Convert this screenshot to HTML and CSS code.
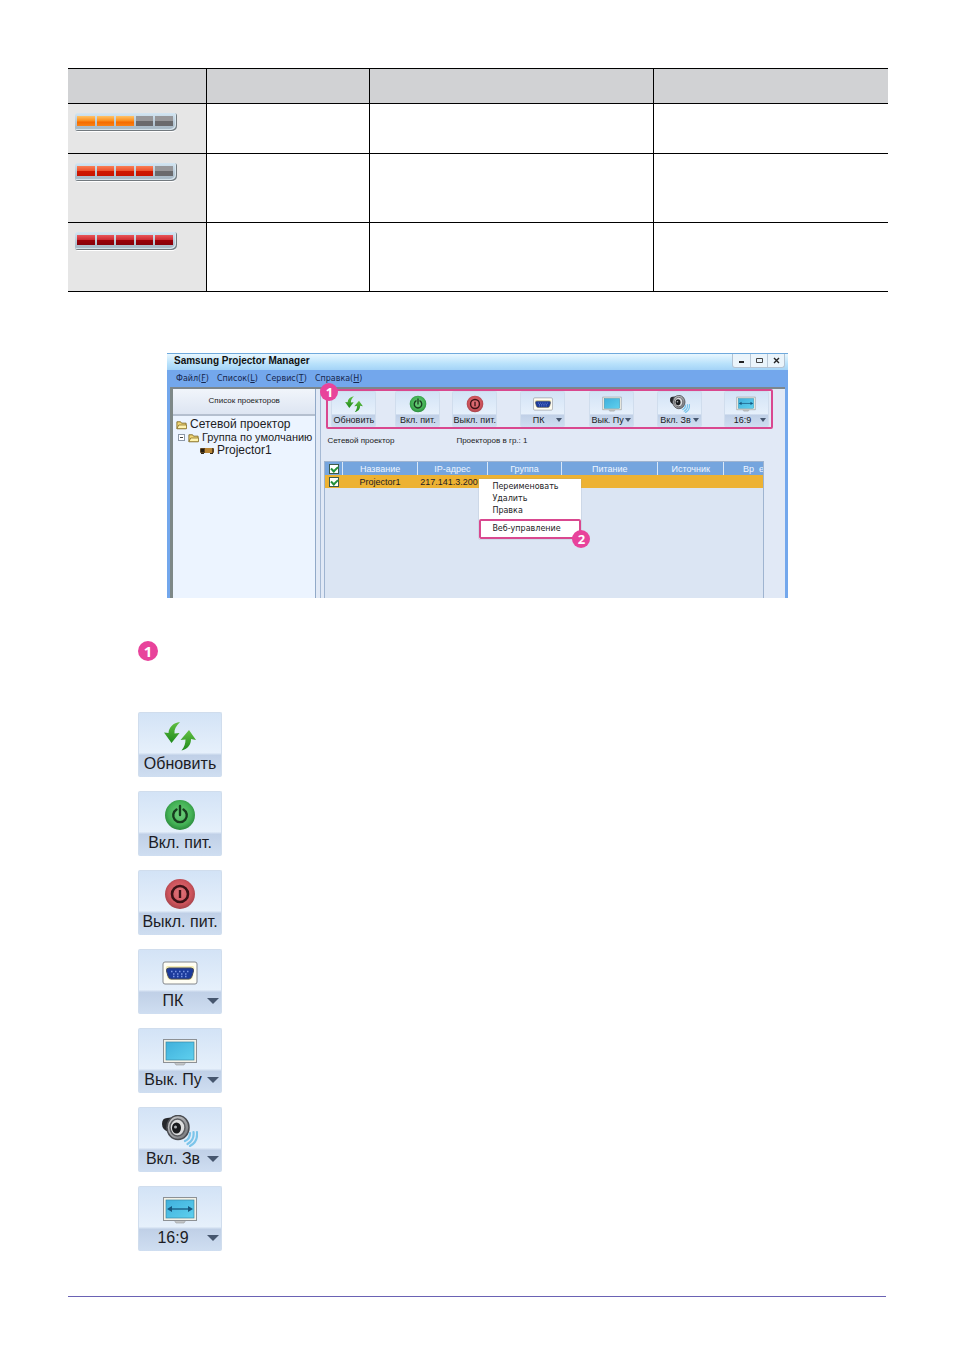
FILE: index.html
```html
<!DOCTYPE html>
<html lang="ru">
    <head>
        <meta charset="UTF-8">
        <meta name="viewport" content="width=device-width, initial-scale=1.0">
        <title>Samsung Projector Manager</title>
        <link rel="stylesheet" href="styles.css">
    </head>
    <body>
        <svg class="sprite" width="0" height="0">
            <defs>
                <linearGradient id="leaf" x1="0" y1="0" x2="0" y2="1"><stop offset="0" stop-color="#62c043"/><stop offset="1" stop-color="#1f8a1c"/></linearGradient>
                <radialGradient id="green" cx=".5" cy=".45" r=".55"><stop offset="0" stop-color="#6fd07c"/><stop offset=".7" stop-color="#43b155"/><stop offset="1" stop-color="#2b8a3c"/></radialGradient>
                <radialGradient id="red" cx=".5" cy=".45" r=".55"><stop offset="0" stop-color="#e0747a"/><stop offset=".7" stop-color="#cd545c"/><stop offset="1" stop-color="#a5434b"/></radialGradient>
                <linearGradient id="screen" x1="0" y1="0" x2="1" y2="1"><stop offset="0" stop-color="#3fb0dc"/><stop offset="1" stop-color="#5fd0ee"/></linearGradient>
                <linearGradient id="metal" x1="0" y1="0" x2="1" y2="1"><stop offset="0" stop-color="#d5d6d8"/><stop offset="1" stop-color="#6d6f73"/></linearGradient>
            </defs>
            <symbol id="i-refresh" viewBox="0 0 36 32">
                <path fill="url(#leaf)" d="M18 2C11 3 7 7 6.500 13L2 12.500l7.500 10.500 8-10-5 .5C12 9.500 14 6 18 2z"/>
                <path fill="url(#leaf)" d="M27 10l-8.500 10 5-.5c0 4-1 7-4 11 7-2 9.500-6 9.500-11.500l5 1z"/>
            </symbol>
            <symbol id="i-on" viewBox="0 0 36 32">
                <circle cx="18" cy="16" r="15" fill="url(#green)"/>
                <path fill="none" stroke="#173d1e" stroke-width="2.4" stroke-linecap="round" d="M14.500 10.500a6.800 6.800 0 1 0 7 0M18 7v9"/>
            </symbol>
            <symbol id="i-off" viewBox="0 0 36 32">
                <circle cx="18" cy="16" r="15" fill="url(#red)"/>
                <circle cx="18" cy="16" r="8" fill="none" stroke="#3b1216" stroke-width="2.600"/>
                <path stroke="#3b1216" stroke-width="2.400" d="M18 12v8"/>
            </symbol>
            <symbol id="i-pc" viewBox="0 0 36 32">
                <rect x="1" y="5" width="34" height="22" rx="2" fill="#fffef4" stroke="#85888d"/>
                <path d="M5 9h26q2 1 1 4l-1 7q-1 3-3 3H8q-2 0-3-3l-1-7q-1-3 1-4z" fill="#f4ecb4"/>
                <path d="M7 11h22q3 0 2.500 3L30 19q-1 3-3 3H9q-2 0-3-3l-1.500-5q-.5-3 2.500-3z" fill="#1c3b9c" stroke="#454b60"/>
                <path stroke="#7c96e4" stroke-width="1.500" stroke-dasharray="1.500 2.500" d="M9 14.500h19M11 17h15M11 19.500h14"/>
            </symbol>
            <symbol id="i-screen" viewBox="0 0 36 32">
                <path d="M12 26h12l-2 3h-8z" fill="#c3c6c8" stroke="#979b9e" stroke-width=".6"/>
                <rect x="1.500" y="3.500" width="33" height="23" fill="#f3f1e6" stroke="#8d9195"/>
                <rect x="4" y="6" width="28" height="18" fill="url(#screen)" stroke="#3989a6" stroke-width=".7"/>
            </symbol>
            <symbol id="i-sound" viewBox="0 0 36 32">
                <path d="M0 9Q0 3 5 3l8-1v16l-6-1Q0 15 0 9z" fill="#26282c"/>
                <ellipse cx="16" cy="12.500" rx="11" ry="12" fill="url(#metal)" stroke="#4a4c51" stroke-width="1.500"/>
                <ellipse cx="15.500" cy="12.500" rx="7.500" ry="8.500" fill="#dcddde" stroke="#5b5d61" stroke-width="1.500"/>
                <ellipse cx="14.500" cy="13" rx="4.500" ry="5.500" fill="#191a1d"/>
                <circle cx="13.500" cy="12" r="1.500" fill="#aeb2b6"/>
                <path fill="none" stroke="#7cc5ea" stroke-width="2.200" stroke-linecap="round" d="M28 18q0 6-5 8M31.500 17q1 8-6 12M35 17q1 10-7 14"/>
            </symbol>
            <symbol id="i-ratio" viewBox="0 0 36 32">
                <path d="M12 26h12l-2 3h-8z" fill="#c3c6c8" stroke="#979b9e" stroke-width=".6"/>
                <rect x="1.500" y="3.500" width="33" height="23" fill="#f3f1e6" stroke="#8d9195"/>
                <rect x="4" y="6" width="28" height="18" fill="url(#screen)" stroke="#3989a6" stroke-width=".7"/>
                <path stroke="#17577e" stroke-width="1.300" d="M7 15h22"/>
                <path fill="#17577e" d="M5 15l5-3v6zM31 15l-5-3v6z"/>
            </symbol>
            <symbol id="i-folder" viewBox="0 0 12 10">
                <path d="M1 9V1.500h4l1 1.500h5v6z" fill="#f3d775" stroke="#806a24"/>
                <path d="M1 9l2-4h8.500v4z" fill="#fff3ae" stroke="#806a24" stroke-width=".8"/>
            </symbol>
            <symbol id="i-projector" viewBox="0 0 14 8">
                <rect y="1" width="14" height="5" rx="1" fill="#5d4420"/>
                <rect x="5" y="1" width="7" height="5" fill="#b98636"/>
                <path d="M1 6h3v1H1zM10 6h3v1h-3z" fill="#2d2516"/>
                <rect x="1" y="2" width="3" height="3" fill="#231b10"/>
            </symbol>
        </svg>

        <main class="page">
            <table class="levels">
                <thead>
                    <tr><th></th><th></th><th></th><th></th></tr>
                </thead>
                <tbody>
                    <tr class="short">
                        <td><div class="meter orange"><i class="on"></i><i class="on"></i><i class="on"></i><i></i><i></i></div></td>
                        <td></td><td></td><td></td>
                    </tr>
                    <tr>
                        <td><div class="meter red"><i class="on"></i><i class="on"></i><i class="on"></i><i class="on"></i><i></i></div></td>
                        <td></td><td></td><td></td>
                    </tr>
                    <tr>
                        <td><div class="meter dark"><i class="on"></i><i class="on"></i><i class="on"></i><i class="on"></i><i class="on"></i></div></td>
                        <td></td><td></td><td></td>
                    </tr>
                </tbody>
            </table>

            <section class="window">
                <header class="titlebar">
                    <h1>Samsung Projector Manager</h1>
                    <div class="controls">
                        <button aria-label="Свернуть"><svg width="7" height="7"><path d="M1 5h5" stroke="#222" stroke-width="2"/></svg></button>
                        <button aria-label="Развернуть"><svg width="7" height="7"><path d="M.5 1.500h6v4h-6z" fill="none" stroke="#444"/></svg></button>
                        <button aria-label="Закрыть"><svg width="7" height="7"><path d="M1 1l5 5M6 1L1 6" stroke="#222" stroke-width="1.400"/></svg></button>
                    </div>
                </header>
                <nav class="menu">
                    <a href="#">Файл(<u>F</u>)</a>
                    <a href="#">Список(<u>L</u>)</a>
                    <a href="#">Сервис(<u>T</u>)</a>
                    <a href="#">Справка(<u>H</u>)</a>
                </nav>
                <div class="panes">
                    <aside class="side">
                        <h2>Список проекторов</h2>
                        <ul class="tree">
                            <li><svg class="folder"><use href="#i-folder"/></svg>Сетевой проектор</li>
                            <li class="sub"><span class="minus"></span><svg class="folder"><use href="#i-folder"/></svg>Группа по умолчанию</li>
                            <li class="leaf"><svg class="projector"><use href="#i-projector"/></svg>Projector1</li>
                        </ul>
                    </aside>
                    <div class="work">
                        <div class="toolbar">
                            <span class="badge first">1</span>
                            <button class="tool"><svg><use href="#i-refresh"/></svg><span class="label"><b>Обновить</b></span></button>
                            <button class="tool"><svg><use href="#i-on"/></svg><span class="label"><b>Вкл. пит.</b></span></button>
                            <button class="tool"><svg><use href="#i-off"/></svg><span class="label"><b>Выкл. пит.</b></span></button>
                            <button class="tool"><svg><use href="#i-pc"/></svg><span class="label"><b>ПК</b><i></i></span></button>
                            <button class="tool"><svg><use href="#i-screen"/></svg><span class="label"><b>Вык. Пу</b><i></i></span></button>
                            <button class="tool"><svg><use href="#i-sound"/></svg><span class="label"><b>Вкл. Зв</b><i></i></span></button>
                            <button class="tool"><svg><use href="#i-ratio"/></svg><span class="label"><b>16:9</b><i></i></span></button>
                        </div>
                        <div class="info">
                            <span>Сетевой проектор</span>
                            <span>Проекторов в гр.: 1</span>
                        </div>
                        <div class="list">
                            <table class="devices">
                                <thead>
                                    <tr>
                                        <th><input type="checkbox" aria-label="Выбрать все" checked></th>
                                        <th>Название</th>
                                        <th>IP-адрес</th>
                                        <th>Группа</th>
                                        <th>Питание</th>
                                        <th>Источник</th>
                                        <th class="cut">Вр &nbsp;е</th>
                                    </tr>
                                </thead>
                                <tbody>
                                    <tr>
                                        <td><input type="checkbox" aria-label="Projector1" checked></td>
                                        <td>Projector1</td>
                                        <td class="ip">217.141.3.200</td>
                                        <td></td><td></td><td></td><td></td>
                                    </tr>
                                </tbody>
                            </table>
                            <div class="context">
                                <button>Переименовать</button>
                                <button>Удалить</button>
                                <button>Правка</button>
                                <button class="marked">Веб-управление</button>
                                <span class="badge second">2</span>
                            </div>
                        </div>
                    </div>
                </div>
            </section>

            <section class="legend">
                <span class="badge big">1</span>
                <div class="buttons">
                    <button class="tool large"><svg><use href="#i-refresh"/></svg><span class="label"><b>Обновить</b></span></button>
                    <button class="tool large"><svg><use href="#i-on"/></svg><span class="label"><b>Вкл. пит.</b></span></button>
                    <button class="tool large"><svg><use href="#i-off"/></svg><span class="label"><b>Выкл. пит.</b></span></button>
                    <button class="tool large"><svg><use href="#i-pc"/></svg><span class="label"><b>ПК</b><i></i></span></button>
                    <button class="tool large"><svg><use href="#i-screen"/></svg><span class="label"><b>Вык. Пу</b><i></i></span></button>
                    <button class="tool large"><svg><use href="#i-sound"/></svg><span class="label"><b>Вкл. Зв</b><i></i></span></button>
                    <button class="tool large"><svg><use href="#i-ratio"/></svg><span class="label"><b>16:9</b><i></i></span></button>
                </div>
            </section>
            <hr class="line">
        </main>
    </body>
</html>
```

FILE: styles.css
```css
:root{
    --pink: #e8439b;
    --frame: #d9488f;
    --blue: #73a7ec;
}
*{
    padding: 0;
    margin: 0;
    box-sizing: border-box;
}
body{
    background: #fff;
    color: #1c1c24;
    font-family: "Liberation Sans", Arial, sans-serif;
}
button{border: none; background: none; font: inherit; color: inherit;}
.sprite{position: absolute;}
.page{padding: 68px 66px 53px 68px;}

/* level table */
.levels{width: 100%; border-collapse: collapse; table-layout: fixed;}
.levels th, .levels td{border: 1px solid #000; vertical-align: top;}
.levels th:first-child, .levels td:first-child{border-left: none;}
.levels th:last-child, .levels td:last-child{border-right: none;}
.levels th{height: 35px; background: #d1d2d4;}
.levels th:nth-child(1){width: 138px;}
.levels th:nth-child(2){width: 163px;}
.levels th:nth-child(3){width: 284px;}
.levels td{height: 69px; padding: 9px 5px;}
.levels .short td{height: 50px;}
.levels td:first-child{background: #e6e6e6;}
.meter{
    display: flex;
    gap: 2px;
    width: 102px;
    height: 18px;
    margin-left: 2px;
    padding: 3px 4px 5px 2px;
    border-radius: 3px 3px 5px 3px;
    background: linear-gradient(#d3e6f3, #9fb0bd);
    box-shadow: inset -1px -1px 0 #72797e, inset -2px -2px 1px #dbe8f0, 0 2px 0 -1px #fff;
}
.meter i{flex: 1; background: linear-gradient(#97979a 45%, #6a6a6d 55%);}
.orange .on{background: linear-gradient(#ffc266, #fb8c1c 50%, #f56a00 60%, #f98216);}
.red .on{background: linear-gradient(#f97e54, #ee5330 45%, #cf1800 55%, #c81400);}
.dark .on{background: linear-gradient(#e8575c, #cf2c34 45%, #990008 55%, #86000a);}

/* application window */
.window{
    margin: 61px 100px 0 99px;
    background: var(--blue);
}
.titlebar{
    display: flex;
    justify-content: space-between;
    height: 17px;
    padding: 0 3px 0 7px;
    border-top: 1px solid #6fa9dc;
    background: linear-gradient(#e8f7ff, #b9e2fb 60%, #a3d3f7);
}
.titlebar h1{font-size: 10px; line-height: 14px; color: #111;}
.controls{display: flex; height: 14px; border: 1px solid #b3c3d3; border-top: none; border-radius: 0 0 3px 3px; background: #eaf4fb;}
.controls button{display: flex; align-items: center; justify-content: center; width: 17px;}
.controls button + button{border-left: 1px solid #b9c8d6;}
.menu{display: flex; gap: 8px; height: 17px; padding-left: 9px;}
.menu a{font: 8px/17px "DejaVu Sans", sans-serif; color: #16264d; text-decoration: none;}
.panes{
    display: flex;
    margin: 0 3px;
    border-top: 2px solid #7c868c;
    border-left: 3px solid #7e8887;
    background: #e1e9f6;
}
.side{flex: 0 0 141px; border-right: 1px solid #91a9c8; background: #ecf4ff;}
.side h2{
    height: 27px;
    border-bottom: 2px solid #b4bfcf;
    background: linear-gradient(#f1f5fb, #dde5f2);
    font-size: 8px;
    line-height: 24px;
    font-weight: normal;
    text-align: center;
}
.tree{padding: 2px 3px; list-style: none; font-size: 12px; line-height: 13px;}
.tree li{display: flex; align-items: center; gap: 3px; white-space: nowrap;}
.tree .sub{padding-left: 2px; font-size: 11px;}
.tree .leaf{padding-left: 24px;}
.folder{flex: none; width: 11px; height: 10px;}
.projector{flex: none; width: 14px; height: 8px;}
.minus{width: 7px; height: 7px; border: 1px solid #8c98a8; background: linear-gradient(#444, #444) center / 3px 1px no-repeat #fff;}
.work{
    flex: 1;
    min-width: 0;
    margin-left: 4px;
    padding: 0 12px 0 4px;
    border-left: 1px solid #a5b9d4;
}

.toolbar{
    position: relative;
    display: grid;
    grid-template-columns: 64fr 57fr 68fr 69fr 68fr 67fr 46px;
    margin-left: 1px;
    padding: 0 1px 0 3px;
    border: 2px solid var(--frame);
    border-radius: 2px;
}
.tool{
    display: flex;
    flex-direction: column;
    align-items: center;
    width: 45px;
    height: 36px;
    border: 1px solid #d0dded;
    border-bottom: none;
    border-radius: 2px;
    background: linear-gradient(#d3e3f6, #e6f0fb 62%, #c0d0e7 66%, #cfdef1);
    font-size: 9px;
}
.tool svg{flex: none; width: 20px; height: 18px; margin-top: 3px;}
.label{display: flex; align-items: center; width: 100%; height: 14px; line-height: 14px;}
.label b{flex: 1; font-weight: normal; text-align: center; white-space: nowrap;}
.label i{margin-right: 2px; border: 3px solid transparent; border-top: 4px solid #46566e; border-bottom: none;}
.badge{
    display: flex;
    align-items: center;
    justify-content: center;
    width: 18px;
    height: 18px;
    border-radius: 50%;
    background: var(--pink);
    color: #fff;
    font: bold 13px "Open Sans", sans-serif;
}
.first{position: absolute; left: -8px; top: -8px;}
.second{position: absolute; right: -9px; bottom: -9px;}
.info{display: flex; gap: 62px; padding: 6px 2px 14px; font-size: 8px; line-height: 12px;}

/* device list */
.list{
    position: relative;
    min-height: 137px;
    margin: 0 9px 0 -1px;
    border: 1px solid #9fb4d0;
    border-bottom: none;
    background: #dbe5f3;
}
.devices{width: 100%; border-collapse: collapse; table-layout: fixed; font-size: 9px;}
.devices th, .devices td{height: 13px; line-height: 12px; overflow: hidden; white-space: nowrap;}
.devices th{background: #75a5de; border-right: 1px solid #dbe8f6; color: #eef5ff; font-weight: normal;}
.devices th:last-child{border-right: none;}
.devices td{background: #edb233; text-align: center;}
.devices td.ip{padding-left: 3px; text-align: left;}
.devices th.cut{padding-left: 19px; text-align: left;}
.devices th:nth-child(1){width: 4%;}
.devices th:nth-child(2){width: 17%;}
.devices th:nth-child(3){width: 16%;}
.devices th:nth-child(4){width: 17%;}
.devices th:nth-child(5){width: 22%;}
.devices th:nth-child(6){width: 15%;}
.devices input{
    display: block;
    appearance: none;
    width: 10px;
    height: 10px;
    margin: auto;
    border: 1px solid #3d5a4a;
    background: #fff;
}
.devices input:checked::after{
    content: "";
    display: block;
    width: 5px;
    height: 3px;
    margin: 1px;
    border: solid #23903a;
    border-width: 0 0 2px 2px;
    transform: rotate(-45deg);
}
.context{
    position: absolute;
    left: 154px;
    top: 17px;
    width: 102px;
    padding-top: 2px;
    background: #fff;
    box-shadow: 0 0 1px #8898ac;
}
.context button{
    display: block;
    width: 100%;
    height: 12px;
    padding-left: 13px;
    font: 8px/12px "DejaVu Sans", sans-serif;
    text-align: left;
    white-space: nowrap;
}
.context .marked{height: 20px; margin-top: 2px; padding-left: 11px; border: 2px solid var(--frame); border-radius: 2px;}

/* button legend */
.legend{padding: 43px 70px 45px;}
.big{width: 20px; height: 20px; font-size: 15px;}
.buttons{display: flex; flex-direction: column; gap: 14px; margin-top: 51px;}
.large{width: 84px; height: 65px; font-size: 16px;}
.large svg{width: 36px; height: 32px; margin-top: 7px;}
.large .label{height: 24px; line-height: 24px;}
.large .label i{border-width: 6px 6px 0;}
.line{height: 1px; margin-right: 2px; border: none; background: #6a62b4;}
```
